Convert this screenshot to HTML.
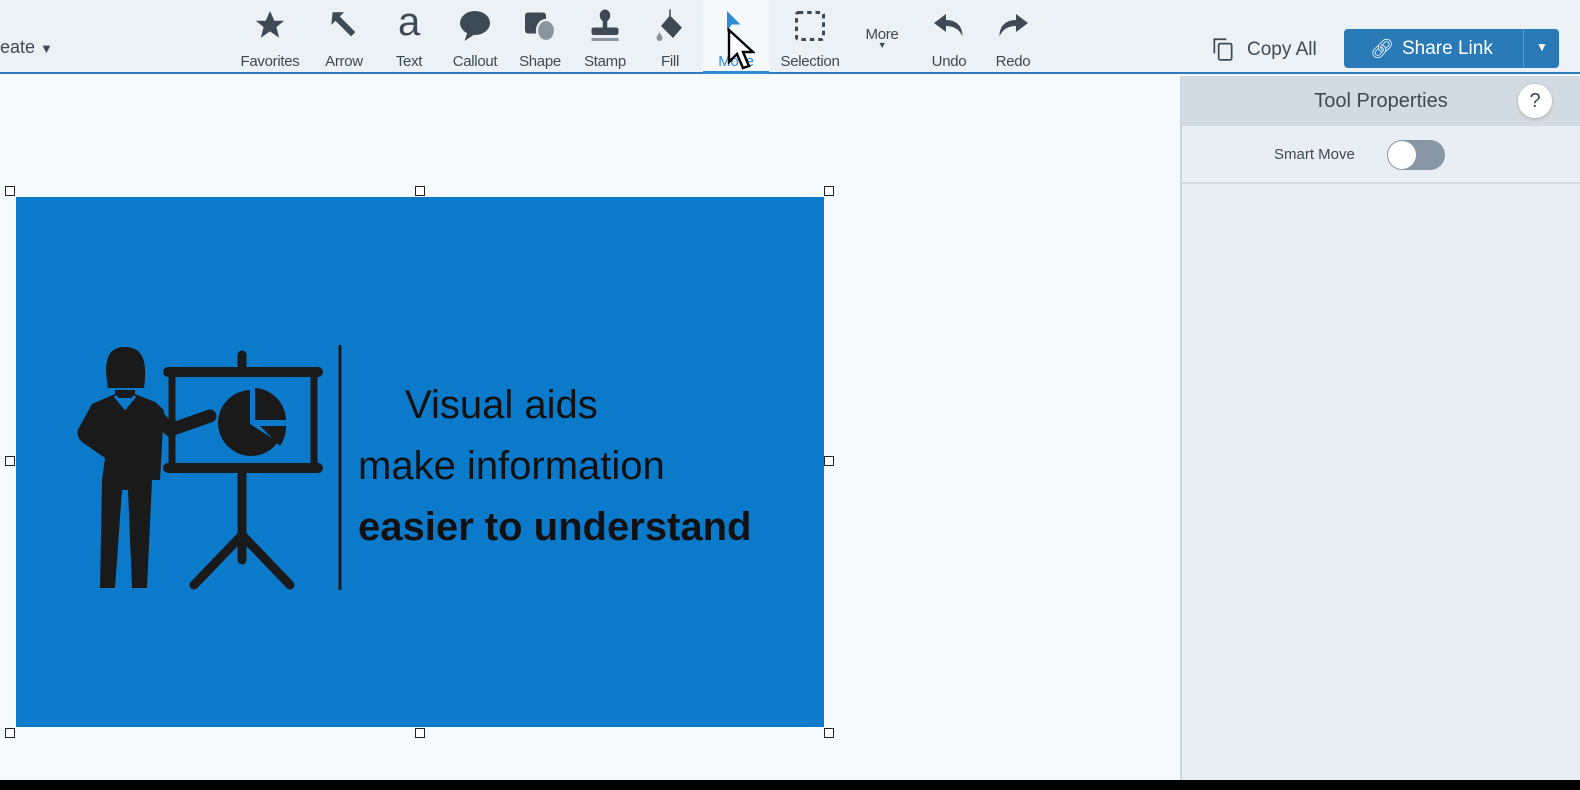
<!DOCTYPE html>
<html><head><style>
*{margin:0;padding:0;box-sizing:border-box}
body{width:1580px;height:790px;overflow:hidden;background:#f5f8fa;font-family:"Liberation Sans",sans-serif;position:relative}
.tb{position:absolute;left:0;top:0;width:1580px;height:74px;background:#ebf1f5;border-bottom:2px solid #2f7bbd}
.tool{position:absolute;top:0;height:74px;text-align:center;font-size:15px;color:#3d4a55;letter-spacing:-0.3px}
.tool .l{position:absolute;bottom:4px;left:0;right:0}
.tool svg{position:absolute;top:8px;left:50%;transform:translateX(-50%)}
.canvas{position:absolute;left:0;top:76px;width:1180px;height:704px;background:#f7fafc}
.panel{position:absolute;left:1180px;top:76px;width:400px;height:704px;background:#e8eef3;border-left:2px solid #cfd7de}
.ph{height:50px;background:#d3dbe2;text-align:center;line-height:50px;font-size:20px;color:#3d4a55}
.h{position:absolute;width:10px;height:10px;border:1px solid #222;background:#fff}
</style></head><body>
<div class="tb">
 <div style="position:absolute;left:0;top:37px;font-size:18px;color:#3d4a55">eate <span style="font-size:13px">▼</span></div>
 <div class="tool" style="left:230px;width:80px"><svg width="34" height="34" viewBox="0 0 24 24"><path d="M12 2l3 7h7l-5.5 4.5 2 7.5L12 16.5 5.5 21l2-7.5L2 9h7z" fill="#3d4a55"/></svg><div class="l">Favorites</div></div>
 <div class="tool" style="left:314px;width:60px"><svg width="34" height="34" viewBox="0 0 24 24"><path d="M4 3h8l-3 3 11 11-3 3L6 9l-3 3z" fill="#3d4a55"/></svg><div class="l">Arrow</div></div>
 <div class="tool" style="left:384px;width:50px"><div style="position:absolute;top:0;left:0;right:0;font-size:40px;font-weight:300;color:#3d4a55">a</div><div class="l">Text</div></div>
 <div class="tool" style="left:444px;width:62px"><svg width="36" height="36" viewBox="0 0 24 24"><ellipse cx="12" cy="10" rx="10" ry="8" fill="#3d4a55"/><path d="M7 16l-2 6 6-4z" fill="#3d4a55"/></svg><div class="l">Callout</div></div>
 <div class="tool" style="left:510px;width:60px"><svg width="36" height="36" viewBox="0 0 24 24"><rect x="2" y="3" width="14" height="14" rx="2" fill="#3d4a55"/><ellipse cx="16" cy="15" rx="6" ry="7" fill="#8a959f" stroke="#ebf1f5" stroke-width="1.5"/></svg><div class="l">Shape</div></div>
 <div class="tool" style="left:574px;width:62px"><svg width="36" height="36" viewBox="0 0 24 24"><ellipse cx="12" cy="5" rx="3.5" ry="4" fill="#3d4a55"/><rect x="10.5" y="7" width="3" height="7" fill="#3d4a55"/><rect x="3" y="13" width="18" height="5" rx="1.5" fill="#3d4a55"/><rect x="3" y="20" width="18" height="2" fill="#8a959f"/></svg><div class="l">Stamp</div></div>
 <div class="tool" style="left:645px;width:50px"><svg width="36" height="36" viewBox="0 0 24 24"><path d="M12 5l8 8-6 7-8-8z" fill="#3d4a55"/><path d="M12 1v8" stroke="#3d4a55" stroke-width="1"/><path d="M5 16c-1 2-2 3-2 4a2 2 0 004 0c0-1-1-2-2-4z" fill="#8a959f"/></svg><div class="l">Fill</div></div>
 <div style="position:absolute;left:703px;top:0;width:66px;height:74px;background:#f5f9fc;border-bottom:3px solid #2f8bd0"></div>
 <div class="tool" style="left:703px;width:66px"><svg width="36" height="36" viewBox="0 0 24 24"><path d="M6 2l9 9H9l-3 5z" fill="#2f8bd0"/></svg><div class="l" style="color:#2f8bd0">Move</div>
 <svg style="top:28px;left:24px;transform:none" width="28" height="44" viewBox="0 0 14 22"><path d="M1 1v16l4-4 3 7 3-1-3-7h5z" fill="#fff" stroke="#000" stroke-width="1.2"/></svg></div>
 <div class="tool" style="left:772px;width:76px"><svg width="36" height="36" viewBox="0 0 24 24"><rect x="3" y="3" width="18" height="18" rx="1.5" fill="none" stroke="#3d4a55" stroke-width="2" stroke-dasharray="3 2.6"/></svg><div class="l">Selection</div></div>
 <div class="tool" style="left:856px;width:52px"><div style="position:absolute;top:26px;left:0;right:0">More</div><div style="position:absolute;top:40px;left:0;right:0;font-size:9px">▼</div></div>
 <div class="tool" style="left:922px;width:54px"><svg width="40" height="36" viewBox="0 0 24 24"><path d="M10 4L2 10l8 6v-4c5 0 9 2 11 7 0-7-4-11-11-11z" fill="#3d4a55"/></svg><div class="l">Undo</div></div>
 <div class="tool" style="left:988px;width:50px"><svg width="40" height="36" viewBox="0 0 24 24"><path d="M14 4l8 6-8 6v-4c-5 0-9 2-11 7 0-7 4-11 11-11z" fill="#3d4a55"/></svg><div class="l">Redo</div></div>
 <svg style="position:absolute;left:1210px;top:36px" width="26" height="26" viewBox="0 0 24 24"><path d="M4 16V3h11" fill="none" stroke="#3d4a55" stroke-width="1.6"/><rect x="8" y="7" width="12" height="15" rx="1.5" fill="none" stroke="#3d4a55" stroke-width="1.6"/></svg>
 <div style="position:absolute;left:1247px;top:39px;font-size:19px;color:#3d4a55">Copy All</div>
 <div style="position:absolute;left:1344px;top:29px;width:215px;height:39px;background:#2a7ab8;border-radius:4px;color:#fff;font-size:19px">
  <span style="position:absolute;left:26px;top:8px">🔗︎</span><span style="position:absolute;left:58px;top:9px">Share Link</span>
  <div style="position:absolute;left:179px;top:0;width:1px;height:39px;background:#5a9ccd"></div>
  <span style="position:absolute;left:192px;top:11px;font-size:12px">▼</span></div>
</div>
<div class="canvas"></div>
<div style="position:absolute;left:16px;top:197px;width:808px;height:530px;background:#0b7acb"></div>
<svg style="position:absolute;left:60px;top:330px" width="300" height="270" viewBox="0 0 300 270">
 <g fill="#1a1a1a" stroke="#1a1a1a">
 <path d="M108 42h150M108 138h150" stroke-width="10" stroke-linecap="round" fill="none"/>
 <path d="M112 42v96M254 42v96" stroke-width="7" fill="none"/>
 <path d="M182 25v17M182 138v92M182 205l-48 50M182 205l48 50" stroke-width="9" stroke-linecap="round" fill="none"/>
 <path d="M190 60a33 33 0 1 0 28 52l-28-18z" stroke="none"/>
 <path d="M195 58a33 33 0 0 1 31 32h-31z" stroke="none"/>
 <path d="M200 96h26a33 33 0 0 1-6 20z" stroke="none"/>
 <path d="M48 58C44 35 45 17 65 17C85 17 87 35 84 58Z" stroke="none"/>
 <path d="M55 60h20v8H55z" stroke="none"/>
 <path d="M32 74L55 64L65 80L75 64L95 72L104 80L100 150L42 150L45 128L22 112Q14 104 20 96Z" stroke="none"/>
 <path d="M92 80L110 100L150 86" stroke-width="13" stroke-linecap="round" stroke-linejoin="round" fill="none"/>
 <path d="M42 150L40 258L55 258L62 160L68 160L72 258L87 258L92 150Z" stroke="none"/>
 <path d="M280 15v245" stroke-width="3"/>
 </g>
 <path d="M55 66L65 78L75 66" fill="none" stroke="#0b7acb" stroke-width="3"/>
</svg>
<div style="position:absolute;left:405px;top:383px;font-size:40px;color:#111">Visual aids</div>
<div style="position:absolute;left:358px;top:444px;font-size:40px;color:#111">make information</div>
<div style="position:absolute;left:358px;top:505px;font-size:40px;font-weight:bold;color:#111">easier to understand</div>
<div class="h" style="left:5px;top:186px"></div><div class="h" style="left:415px;top:186px"></div><div class="h" style="left:824px;top:186px"></div>
<div class="h" style="left:5px;top:456px"></div><div class="h" style="left:824px;top:456px"></div>
<div class="h" style="left:5px;top:728px"></div><div class="h" style="left:415px;top:728px"></div><div class="h" style="left:824px;top:728px"></div>
<div class="panel">
 <div class="ph">Tool Properties</div>
 <div style="position:absolute;left:336px;top:8px;width:34px;height:34px;border-radius:50%;background:#fff;text-align:center;line-height:34px;font-size:20px;color:#3d4a55;box-shadow:0 1px 3px #aaa">?</div>
 <div style="position:absolute;left:92px;top:70px;font-size:15px;color:#3d4a55">Smart Move</div>
 <div style="position:absolute;left:205px;top:64px;width:58px;height:30px;border-radius:15px;background:#8797a5"><div style="position:absolute;left:1px;top:1px;width:28px;height:28px;border-radius:50%;background:#fff"></div></div>
 <div style="position:absolute;left:0;top:106px;width:400px;height:2px;background:#d3dbe2"></div>
</div>
<div style="position:absolute;left:0;top:780px;width:1580px;height:10px;background:#000"></div>
</body></html>
